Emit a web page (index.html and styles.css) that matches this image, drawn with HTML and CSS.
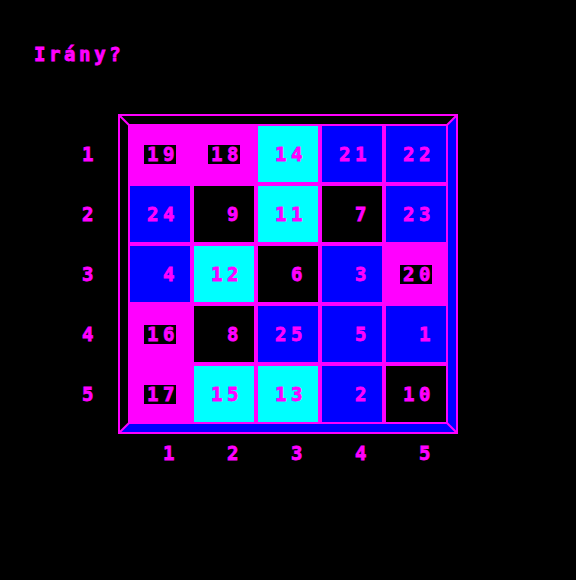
FILE: index.html
```html
<!DOCTYPE html>
<html lang="hu">

<head>
    <meta charset="UTF-8">
    <meta name="viewport" content="width=device-width, initial-scale=1.0">
    <title>Irány?</title>
    <link rel="stylesheet" href="styles.css">
</head>

<body>

    <h1 class="title">Irány?</h1>

    <div class="board">
        <div class="rows">
            <span class="num">1</span>
            <span class="num">2</span>
            <span class="num">3</span>
            <span class="num">4</span>
            <span class="num">5</span>
        </div>

        <div class="frame">
            <div class="bevel">
                <div class="grid">
                    <div class="cell pink"><span class="num mark">19</span></div>
                    <div class="cell pink"><span class="num mark">18</span></div>
                    <div class="cell cyan"><span class="num">14</span></div>
                    <div class="cell blue"><span class="num">21</span></div>
                    <div class="cell blue"><span class="num">22</span></div>

                    <div class="cell blue"><span class="num">24</span></div>
                    <div class="cell black"><span class="num">9</span></div>
                    <div class="cell cyan"><span class="num">11</span></div>
                    <div class="cell black"><span class="num">7</span></div>
                    <div class="cell blue"><span class="num">23</span></div>

                    <div class="cell blue"><span class="num">4</span></div>
                    <div class="cell cyan"><span class="num">12</span></div>
                    <div class="cell black"><span class="num">6</span></div>
                    <div class="cell blue"><span class="num">3</span></div>
                    <div class="cell pink"><span class="num mark">20</span></div>

                    <div class="cell pink"><span class="num mark">16</span></div>
                    <div class="cell black"><span class="num">8</span></div>
                    <div class="cell blue"><span class="num">25</span></div>
                    <div class="cell blue"><span class="num">5</span></div>
                    <div class="cell blue"><span class="num">1</span></div>

                    <div class="cell pink"><span class="num mark">17</span></div>
                    <div class="cell cyan"><span class="num">15</span></div>
                    <div class="cell cyan"><span class="num">13</span></div>
                    <div class="cell blue"><span class="num">2</span></div>
                    <div class="cell black"><span class="num">10</span></div>
                </div>

                <!-- corner mitres of the bevel -->
                <svg class="corners" width="336" height="316" viewBox="0 0 336 316">
                    <g stroke="#f0f" stroke-width="2">
                        <line x1="0" y1="0" x2="9" y2="9" />
                        <line x1="336" y1="0" x2="327" y2="9" />
                        <line x1="0" y1="316" x2="9" y2="307" />
                        <line x1="336" y1="316" x2="327" y2="307" />
                    </g>
                </svg>
            </div>
        </div>
    </div>

    <div class="cols">
        <span class="num">1</span>
        <span class="num">2</span>
        <span class="num">3</span>
        <span class="num">4</span>
        <span class="num">5</span>
    </div>

</body>

</html>
```

FILE: styles.css
```css
html, body {
    background-color: #000;
}

body {
    margin: 0;
    padding: 0;
    min-height: 580px;
    color: #f0f;
    font-family: 'DejaVu Sans Mono', 'Liberation Mono', monospace;
    font-weight: bold;
    font-size: 19px;
    /* heavier strokes, closer to the blocky screen font */
    -webkit-text-stroke: 0.8px #f0f;
}

.title {
    margin: 0;
    padding: 44px 0 0 34px;
    font-size: 19px;
    line-height: 20px;
    letter-spacing: 3.6px;
}

.board {
    display: flex;
    align-items: flex-start;
    margin-top: 50px;
}

/* two character field, digits sit right aligned like on the old screen */
.num {
    display: block;
    width: 32px;
    height: 19px;
    line-height: 19px;
    text-align: right;
    letter-spacing: 4.6px;
}

/* pull back part of the trailing letter spacing */
.num::after {
    content: "";
    margin-right: -3px;
}

.mark {
    background-color: #000;
}

.rows {
    display: grid;
    grid-auto-rows: 56px;
    gap: 4px;
    align-items: center;
    width: 32px;
    margin-left: 63px;
    margin-right: 23px;
    padding-top: 12px;
}

.frame {
    border: 2px solid #f0f;
}

.bevel {
    position: relative;
    border-style: solid;
    border-width: 8px;
    border-color: #000 #00f #00f #000;
}

.grid {
    display: grid;
    grid-template-columns: repeat(5, 60px);
    grid-auto-rows: 56px;
    gap: 4px;
    border: 2px solid #f0f;
    background-color: #f0f;
}

.cell {
    display: flex;
    align-items: center;
    justify-content: center;
}

.pink { background-color: #f0f; }
.cyan { background-color: #0ff; }
.blue { background-color: #00f; }
.black { background-color: #000; }

.corners {
    position: absolute;
    top: -8px;
    left: -8px;
    pointer-events: none;
}

.cols {
    display: grid;
    grid-template-columns: repeat(5, 60px);
    gap: 4px;
    justify-items: center;
    margin-left: 130px;
    margin-top: 10px;
}
```
